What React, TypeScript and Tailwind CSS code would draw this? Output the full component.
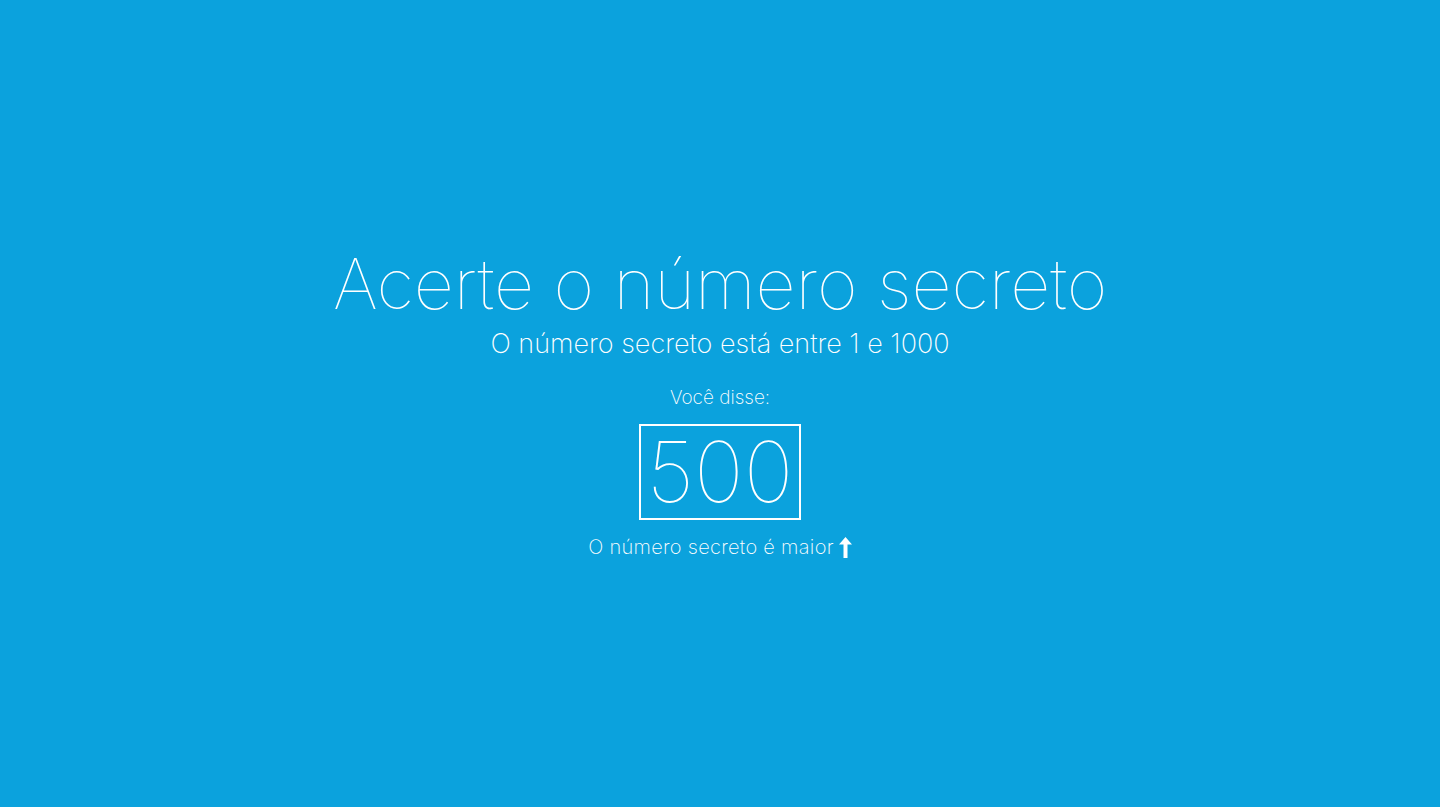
export default function App() {
  return (
    <div className="min-h-screen w-full bg-[#0ba2dd] text-white flex flex-col items-center justify-center font-['Inter',sans-serif] font-extralight">
      <div className="flex flex-col items-center -mt-[8px]">
        <h1 className="text-[70px] leading-[80px] font-thin pt-[4px] tracking-[-0.1px]">Acerte o número secreto</h1>
        <p className="text-[27px] leading-[32px] font-extralight mt-[4px] tracking-[0px]">O número secreto está entre 1 e 1000</p>
        <p className="text-[19px] leading-[24px] font-extralight mt-[26px]">Você disse:</p>
        <div className="mt-[14px] border-2 border-white w-[162px] h-[96px] flex items-center justify-center">
          <span className="text-[84px] leading-none font-thin">500</span>
        </div>
        <p className="text-[20px] leading-[24px] font-extralight mt-[15px] flex items-center gap-[5px] tracking-[0.3px]">
          O número secreto é maior
          <svg width="13" height="21" viewBox="0 0 13 21" fill="white">
            <path d="M6.5 0 L13 7.5 L8.5 7.5 L8.5 21 L4.5 21 L4.5 7.5 L0 7.5 Z" />
          </svg>
        </p>
      </div>
    </div>
  )
}
